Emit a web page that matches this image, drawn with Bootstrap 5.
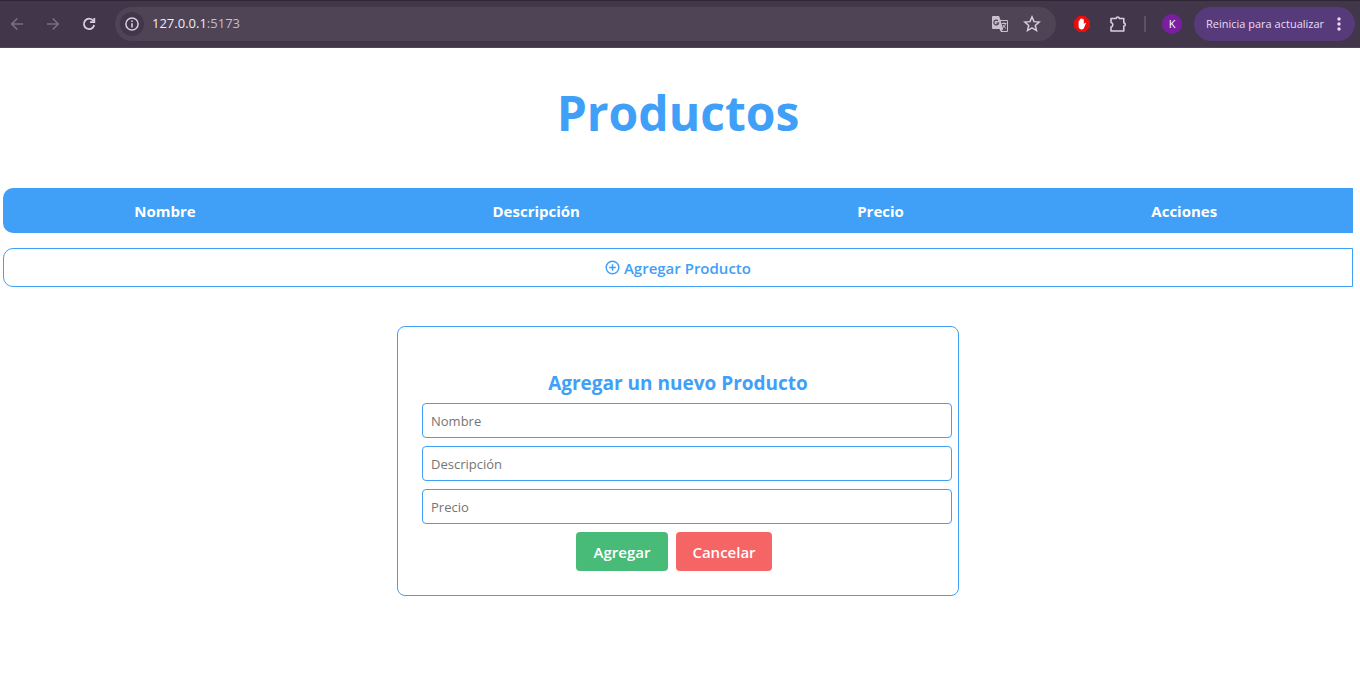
<!DOCTYPE html>
<html lang="es">
<head>
<meta charset="utf-8">
<meta name="viewport" content="width=device-width, initial-scale=1">
<title>Productos</title>
<link href="https://cdn.jsdelivr.net/npm/bootstrap@5.3.0/dist/css/bootstrap.min.css" rel="stylesheet">
<style>
  :root { --azul: #40a0f7; }
  body { font-family: "Open Sans", "Noto Sans", sans-serif; background: #fff; color: var(--azul); }
  .browser-bar { height: 48px; padding: 0 5px; background: #42374a; border-top: 1px solid #2e2635; border-bottom: 1px solid #54464f; color: #d6cede; }
  .tool { width: 24px; height: 24px; margin: 0 6px; padding: 0; border: 0; background: none; color: inherit; display: flex; align-items: center; justify-content: center; flex: none; }
  .tool:disabled { color: #786f80; }
  .address { height: 34px; margin-left: 8px; margin-right: 14px; border-radius: 17px; background: #4e4456; padding: 0 12px 0 5px; min-width: 0; }
  .site-info { margin: 0; border-radius: 12px; background: #42374a; }
  .address .translate { margin-right: 8px; }
  .url { font-size: 13px; color: #f0eaf4; }
  .url span { color: #c5bdcb; }
  .divider { width: 2px; height: 16px; background: #5c5264; margin: 0 16px 0 8px; }
  .avatar { width: 20px; height: 20px; border-radius: 10px; border: 0; padding: 0; background: #7b1fa2; color: #fff; font-size: 11px; line-height: 20px; }
  .restart { width: 161px; height: 34px; border: 0; border-radius: 17px; background: #573a79; color: #e9dcf8; font-size: 11px; font-weight: 500; padding: 0 12px; margin-left: 12px; white-space: nowrap; }
  .page-title { font-size: 48px; line-height: 66px; font-weight: 700; margin: 32px 0 27px; }
  .page-body { padding: 0 7px 0 3px; }
  .products { width: 100%; border-collapse: separate; border-spacing: 0 15px; table-layout: fixed; }
  .products th { background: var(--azul); color: #fff; font-size: 15px; line-height: 21px; padding: 13px 12px 11px; }
  .products th:first-child { border-radius: 10px 0 0 10px; }
  .products td { border: 1px solid var(--azul); border-radius: 10px 0 0 10px; padding: 0; }
  .add-row { width: 100%; height: 37px; border: 0; background: none; color: var(--azul); font-size: 15px; font-weight: 600; padding: 2px 0 0; }
  .add-row svg { margin-top: -6px; }
  .new-product { width: 562px; max-width: 100%; margin: 24px auto 0; border: 1px solid var(--azul); border-radius: 8px; padding: 43px 6px 24px 24px; }
  .new-product h2 { font-size: 19px; line-height: 27px; font-weight: 700; margin: 0 18px 6px 0; }
  .new-product .form-control { height: 35px; border: 1px solid var(--azul); border-radius: 4px; padding: 0 8px; font-size: 13px; margin-bottom: 8px; }
  .new-product .form-control::placeholder { color: #757575; }
  .actions { padding-right: 26px; }
  .actions .btn { height: 39px; border: 0; border-radius: 4px; padding: 2px 0 0; color: #fff; font-size: 15px; font-weight: 600; }
  .actions .btn-add { width: 92px; background: #48bb78; }
  .actions .btn-cancel { width: 96px; background: #f56565; }
</style>
</head>
<body>
<header class="browser-bar d-flex align-items-center">
  <nav class="d-flex" aria-label="Navegación">
    <button class="tool ms-0" disabled aria-label="Atrás"><svg width="14" height="14" viewBox="0 0 14 14" fill="none" stroke="currentColor" stroke-width="1.7"><path d="M13 7H2M7.300 1.500 1.800 7l5.500 5.500"/></svg></button>
    <button class="tool" disabled aria-label="Adelante"><svg width="14" height="14" viewBox="0 0 14 14" fill="none" stroke="currentColor" stroke-width="1.7"><path d="M1 7h11M6.700 1.500 12.200 7l-5.500 5.500"/></svg></button>
    <button class="tool" aria-label="Recargar"><svg width="14" height="14" viewBox="0 0 14 14" fill="none" stroke="currentColor" stroke-width="1.8"><path d="M11.300 3.800A5.200 5.200 0 1 0 12.200 8M12.300 1v4.200H8"/></svg></button>
  </nav>
  <div class="address d-flex align-items-center flex-grow-1">
    <button class="tool site-info" aria-label="Información del sitio"><svg width="14" height="14" viewBox="0 0 14 14"><circle cx="7" cy="7" r="6.1" fill="none" stroke="currentColor" stroke-width="1.5"/><path d="M6.200 6.200h1.600v4.200H6.200zM6.200 3.500h1.600v1.600H6.200z" fill="currentColor"/></svg></button>
    <div class="url flex-grow-1 ms-2 text-truncate">127.0.0.1<span>:5173</span></div>
    <button class="tool translate" aria-label="Traducir"><svg width="18" height="18" viewBox="0 0 18 18"><path d="M2 1h6l1.500 4H16a1 1 0 0 1 1 1v10a1 1 0 0 1-1 1h-6l-1.500-3H2a1 1 0 0 1-1-1V2a1 1 0 0 1 1-1z" fill="#c9c0cd"/><path d="M9.700 6H16v10h-5.300l1.500-2z" fill="#4e4456"/><path d="M7 5.800A2.400 2.400 0 1 0 7.600 8H5.300" fill="none" stroke="#4e4456" stroke-width="1.200"/><path d="M10.700 8.500h4.800M13 7.300v1.200M14.700 8.500c-.5 2-1.600 3.300-2.800 4.200M12 10c.8 1.600 1.700 2.600 3 3.400" fill="none" stroke="#c9c0cd"/></svg></button>
    <button class="tool mx-0" aria-label="Marcador"><svg width="18" height="18" viewBox="0 0 16 16" fill="none" stroke="currentColor" stroke-width="1.3"><path d="m8 1.700 1.800 4.200 4.600.4-3.500 3 1.100 4.500L8 11.400l-4 2.400 1.100-4.500-3.500-3 4.600-.4z"/></svg></button>
  </div>
  <button class="tool ms-0" aria-label="Bloqueador"><svg width="16" height="16" viewBox="0 0 16 16"><path d="M4.700 0h6.600L16 4.700v6.600L11.300 16H4.700L0 11.300V4.700z" fill="#ea0d0d"/><path d="M4.600 8.700V5.200c0-1 1.200-1 1.200 0V3.600c0-1 1.300-1 1.300 0V3c0-1 1.400-1 1.400 0v.7c0-1 1.300-1 1.300 0v4.500l.9-1.200c.6-.7 1.500-.1 1.100.6L10.200 11.500C9.700 12.700 9 13.400 7.800 13.400c-2 0-3.200-1.400-3.200-3.200z" fill="#fff"/></svg></button>
  <button class="tool" aria-label="Extensiones"><svg width="18" height="18" viewBox="0 0 18 18"><path d="M2 3.500h5.200a1.500 1.500 0 0 1 3 0H14.800V8a1.500 1.500 0 0 1 0 3v5H2v-4a2.300 2.300 0 0 0 0-4.500z" fill="none" stroke="currentColor" stroke-width="1.600" stroke-linejoin="round"/></svg></button>
  <div class="divider"></div>
  <button class="avatar" aria-label="Perfil">K</button>
  <button class="restart d-flex align-items-center justify-content-between">Reinicia para actualizar<svg width="8" height="16" viewBox="0 0 8 16" fill="currentColor"><circle cx="4" cy="3" r="1.7"/><circle cx="4" cy="8" r="1.7"/><circle cx="4" cy="13" r="1.7"/></svg></button>
</header>
<main class="page-body">
  <h1 class="page-title text-center">Productos</h1>
  <table class="products text-center">
    <colgroup><col style="width:24%"><col style="width:31%"><col style="width:20%"><col style="width:25%"></colgroup>
    <thead><tr><th scope="col">Nombre</th><th scope="col">Descripción</th><th scope="col">Precio</th><th scope="col">Acciones</th></tr></thead>
    <tbody><tr><td colspan="4"><button class="add-row"><svg width="15" height="15" viewBox="0 0 15 15" fill="none" stroke="currentColor" stroke-width="1.5"><circle cx="7.5" cy="7.5" r="6.3"/><path d="M7.500 4.200v6.600M4.200 7.500h6.600"/></svg> Agregar Producto</button></td></tr></tbody>
  </table>
  <form class="new-product">
    <h2 class="text-center">Agregar un nuevo Producto</h2>
    <input class="form-control" type="text" placeholder="Nombre" aria-label="Nombre">
    <input class="form-control" type="text" placeholder="Descripción" aria-label="Descripción">
    <input class="form-control" type="text" placeholder="Precio" aria-label="Precio">
    <div class="actions d-flex justify-content-center gap-2">
      <button class="btn btn-add" type="button">Agregar</button>
      <button class="btn btn-cancel" type="button">Cancelar</button>
    </div>
  </form>
</main>
<script src="https://cdn.jsdelivr.net/npm/bootstrap@5.3.0/dist/js/bootstrap.bundle.min.js"></script>
</body>
</html>
